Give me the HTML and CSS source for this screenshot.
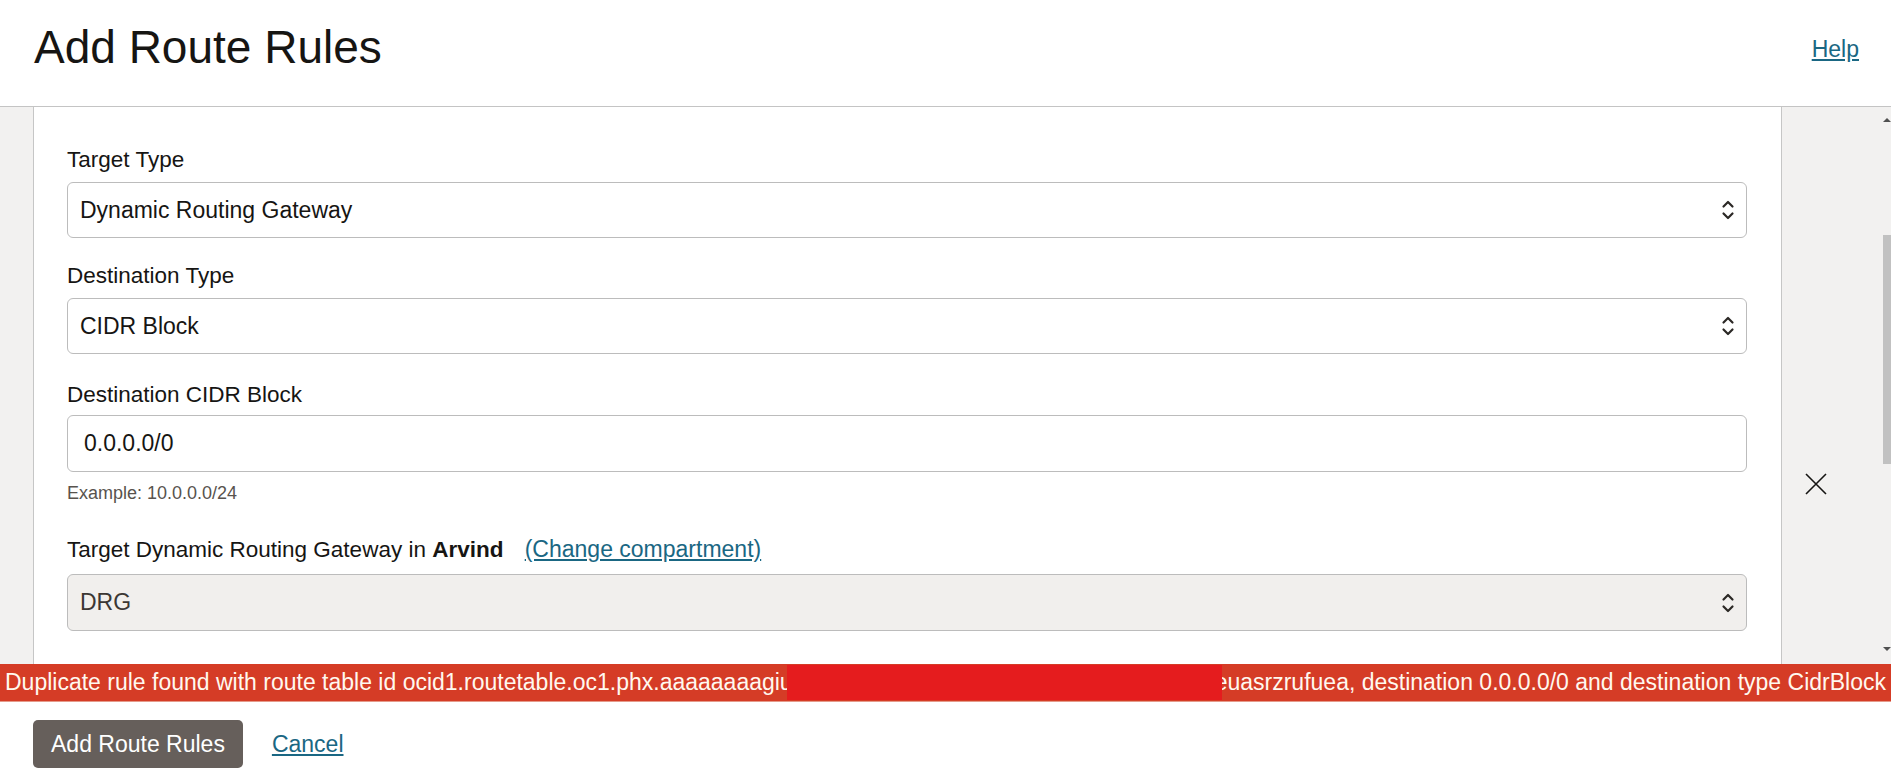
FILE: index.html
```html
<!DOCTYPE html>
<html lang="en">
<head>
    <meta charset="UTF-8">
    <meta name="viewport" content="width=device-width, initial-scale=1.0">
    <title>Add Route Rules</title>
    <link rel="stylesheet" href="styles.css">
</head>
<body>
    <header class="page-header">
        <h1 class="page-title">Add Route Rules</h1>
        <a class="help-link" href="#">Help</a>
    </header>

    <div class="page-body">
        <div class="gutter-left"></div>

        <div class="panel">
            <form class="rule-form">
                <div class="field">
                    <label class="field-label">Target Type</label>
                    <div class="select-box">
                        <span>Dynamic Routing Gateway</span>
                        <svg class="chevrons" width="14" height="24" viewBox="0 0 14 24"><path d="M2.5 8.5 L7 4 L11.5 8.5 M2.5 15.5 L7 20 L11.5 15.5" fill="none" stroke="#2b2825" stroke-width="2.2" stroke-linecap="round" stroke-linejoin="round"/></svg>
                    </div>
                </div>

                <div class="field field-spaced">
                    <label class="field-label">Destination Type</label>
                    <div class="select-box">
                        <span>CIDR Block</span>
                        <svg class="chevrons" width="14" height="24" viewBox="0 0 14 24"><path d="M2.5 8.5 L7 4 L11.5 8.5 M2.5 15.5 L7 20 L11.5 15.5" fill="none" stroke="#2b2825" stroke-width="2.2" stroke-linecap="round" stroke-linejoin="round"/></svg>
                    </div>
                </div>

                <div class="field field-hinted">
                    <label class="field-label tight" for="cidr">Destination CIDR Block</label>
                    <input class="text-input" id="cidr" type="text" value="0.0.0.0/0">
                    <div class="hint">Example: 10.0.0.0/24</div>
                </div>

                <div class="field">
                    <label class="field-label with-link">Target Dynamic Routing Gateway in <b>Arvind</b> <a class="change-link" href="#">(Change compartment)</a></label>
                    <div class="select-box disabled">
                        <span>DRG</span>
                        <svg class="chevrons" width="14" height="24" viewBox="0 0 14 24"><path d="M2.5 8.5 L7 4 L11.5 8.5 M2.5 15.5 L7 20 L11.5 15.5" fill="none" stroke="#2b2825" stroke-width="2.2" stroke-linecap="round" stroke-linejoin="round"/></svg>
                    </div>
                </div>
            </form>
        </div>

        <div class="gutter-right">
            <button class="close-btn" type="button" aria-label="Close">
                <svg width="22" height="22" viewBox="0 0 22 22"><path d="M1 1 L21 21 M21 1 L1 21" stroke="#161513" stroke-width="1.6"/></svg>
            </button>
        </div>

        <div class="scrollbar">
            <span class="arrow-up"></span>
            <div class="thumb"></div>
            <span class="arrow-down"></span>
        </div>
    </div>

    <div class="error-bar">Duplicate rule found with route table id ocid1.routetable.oc1.phx.aaaaaaaagiu<span class="redacted"></span><span class="after-redact">euasrzrufuea, destination 0.0.0.0/0 and destination type CidrBlock</span></div>

    <footer class="page-footer">
        <button class="primary-btn" type="button">Add Route Rules</button>
        <a class="cancel-link" href="#">Cancel</a>
    </footer>
</body>
</html>
```

FILE: styles.css
```css
body {
    margin: 0;
    height: 100vh;
    display: flex;
    flex-direction: column;
    overflow: hidden;
    font-family: "Liberation Sans", Arial, sans-serif;
    color: #161513;
    background-color: #ffffff;
}
.page-header {
    display: flex;
    justify-content: space-between;
    align-items: flex-start;
    height: 85px;
    padding: 21px 32px 0 34px;
    border-bottom: 1px solid #c4c4c4;
}
.page-title {
    margin: 0;
    font-size: 46px;
    font-weight: normal;
    line-height: 52px;
}
.help-link {
    margin-top: 15px;
    font-size: 23px;
    line-height: 26px;
    color: #1a6783;
}
.page-body {
    flex: 1;
    min-height: 0;
    display: flex;
    background-color: #f2f1f0;
}
.gutter-left {
    width: 33px;
}
.panel {
    flex: 1;
    background: white;
    border-left: 1px solid #c6c6c6;
    border-right: 1px solid #c6c6c6;
    padding: 40px 34px 0 33px;
    overflow: hidden;
}
.field {
    margin-bottom: 25px;
}
.field-spaced {
    margin-bottom: 28px;
}
.field-hinted {
    margin-bottom: 30px;
}
.field-label {
    display: block;
    font-size: 22.5px;
    line-height: 26px;
    margin-bottom: 9px;
}
.field-label.tight {
    margin-bottom: 7px;
}
.field-label.with-link {
    line-height: 30px;
}
.change-link {
    margin-left: 15px;
    font-size: 23px;
    color: #1a6783;
}
.select-box {
    display: flex;
    align-items: center;
    justify-content: space-between;
    height: 56px;
    box-sizing: border-box;
    padding: 0 11px 0 12px;
    border: 1px solid #bcbcbc;
    border-radius: 6px;
    font-size: 23px;
}
.select-box.disabled {
    height: 57px;
    background-color: #f1efed;
    color: #3b3734;
}
.text-input {
    display: block;
    width: 100%;
    height: 57px;
    box-sizing: border-box;
    padding: 0 16px;
    border: 1px solid #bcbcbc;
    border-radius: 6px;
    font-family: "Liberation Sans", Arial, sans-serif;
    font-size: 23px;
    color: #161513;
}
.hint {
    margin-top: 10px;
    font-size: 18px;
    line-height: 22px;
    color: #58534e;
}
.gutter-right {
    width: 101px;
    padding: 366px 0 0 23px;
    box-sizing: border-box;
}
.close-btn {
    padding: 0;
    border: none;
    background: none;
    width: 22px;
    height: 22px;
}
.scrollbar {
    width: 8px;
    display: flex;
    flex-direction: column;
    align-items: flex-end;
}
.arrow-up {
    margin-top: 11px;
    border-left: 4px solid transparent;
    border-right: 4px solid transparent;
    border-bottom: 4px solid #505050;
    width: 0;
}
.thumb {
    margin-top: 113px;
    width: 8px;
    height: 229px;
    background-color: #c1c1c1;
}
.arrow-down {
    margin-top: auto;
    margin-bottom: 13px;
    border-left: 4px solid transparent;
    border-right: 4px solid transparent;
    border-top: 4px solid #505050;
    width: 0;
}
.error-bar {
    height: 37px;
    padding-left: 5px;
    border-bottom: 1px solid #e59a8a;
    background-color: #d53c26;
    color: #fff8ef;
    font-size: 23px;
    line-height: 37px;
    white-space: nowrap;
    overflow: hidden;
}
.redacted {
    display: inline-block;
    position: relative;
    top: 1px;
    z-index: 1;
    width: 435px;
    height: 35px;
    margin-left: -6px;
    vertical-align: top;
    background-color: #e51c1e;
}
.after-redact {
    margin-left: -7px;
}
.page-footer {
    display: flex;
    align-items: center;
    gap: 29px;
    height: 48px;
    padding: 18px 0 10px 33px;
}
.primary-btn {
    height: 48px;
    padding: 0 18px;
    border: none;
    border-radius: 5px;
    background-color: #665f5b;
    color: white;
    font-family: "Liberation Sans", Arial, sans-serif;
    font-size: 23px;
}
.cancel-link {
    font-size: 23px;
    line-height: 26px;
    color: #1a6783;
}
```
